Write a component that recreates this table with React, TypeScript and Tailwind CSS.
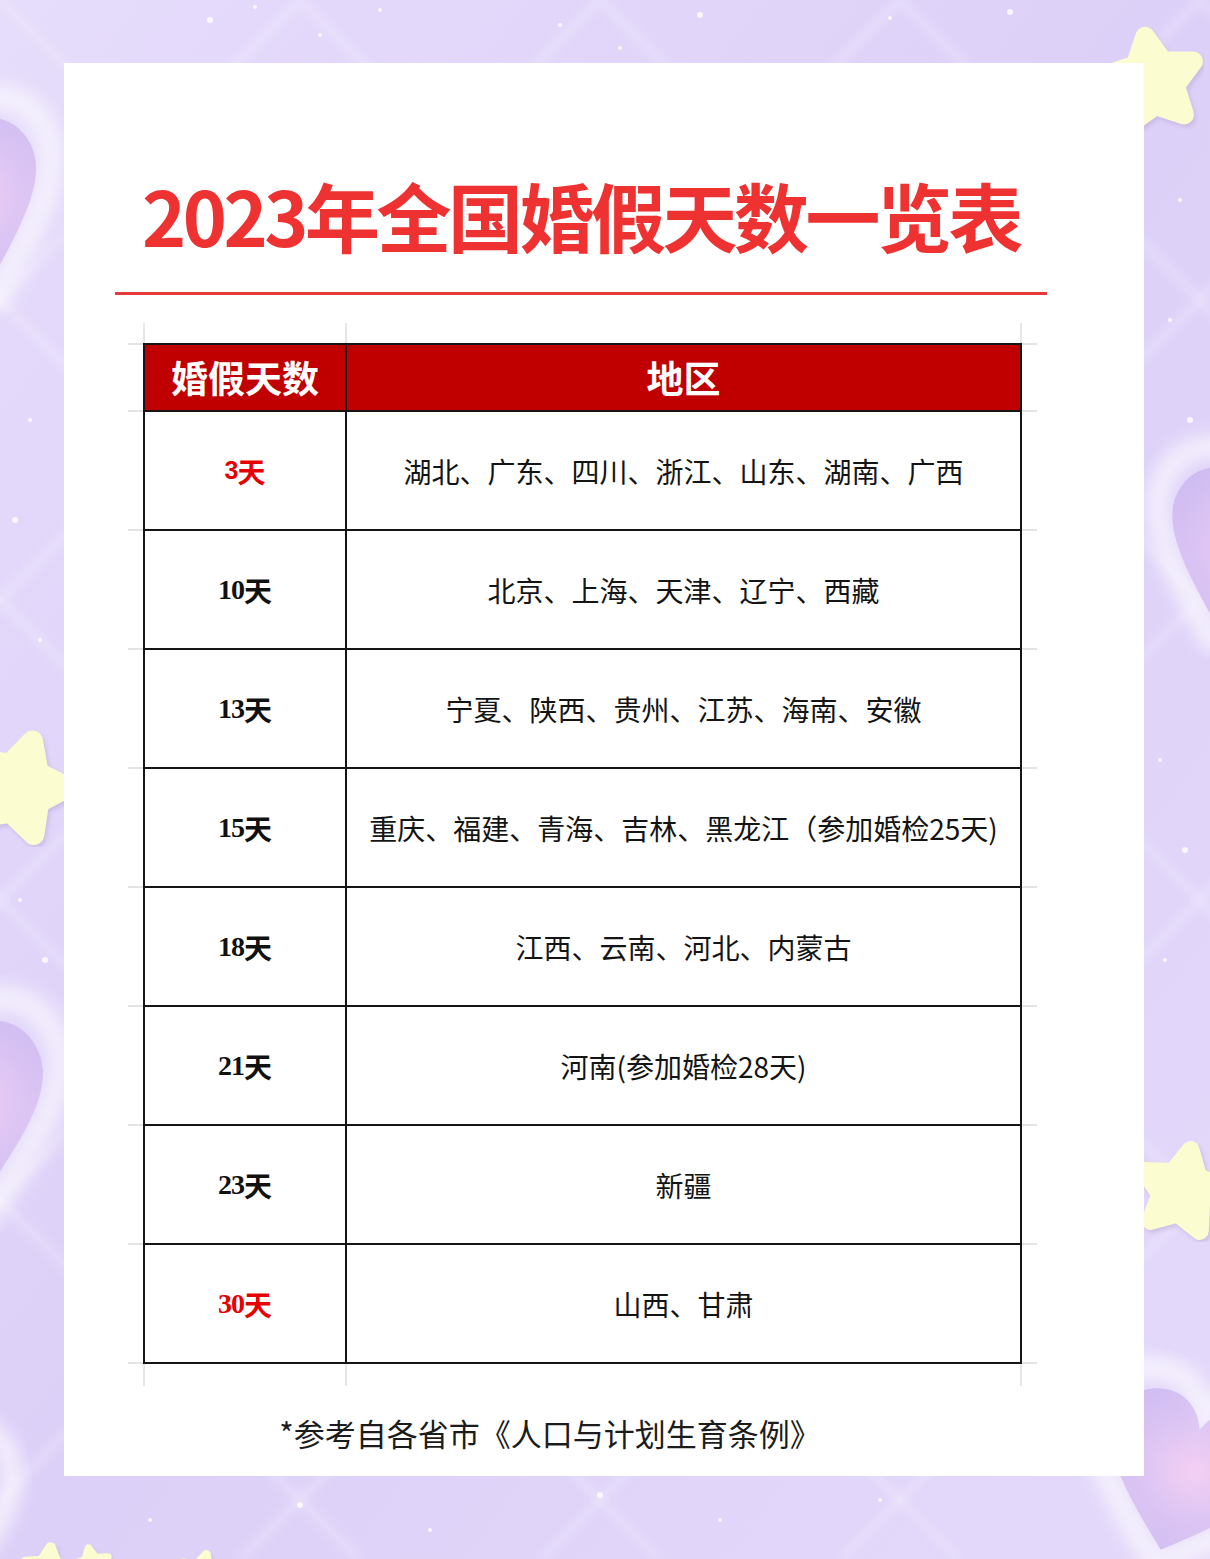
import React from "react";

const rows = [
  { n: "3", red: true, sans: true, r: "湖北、广东、四川、浙江、山东、湖南、广西" },
  { n: "10", r: "北京、上海、天津、辽宁、西藏" },
  { n: "13", r: "宁夏、陕西、贵州、江苏、海南、安徽" },
  { n: "15", r: "重庆、福建、青海、吉林、黑龙江（参加婚检25天)" },
  { n: "18", r: "江西、云南、河北、内蒙古" },
  { n: "21", r: "河南(参加婚检28天)" },
  { n: "23", r: "新疆" },
  { n: "30", red: true, r: "山西、甘肃" },
];

const HEART =
  "M50 92 C 22 68, 0 48, 0 28 C 0 11, 12 0, 27 0 C 38 0, 46 7, 50 17 C 54 7, 62 0, 73 0 C 88 0, 100 11, 100 28 C 100 48, 78 68, 50 92 Z";

function starPoints(cx: number, cy: number, R: number, r: number, rot = 0) {
  const pts: string[] = [];
  for (let i = 0; i < 10; i++) {
    const a = ((Math.PI * 2) / 10) * i - Math.PI / 2 + rot;
    const rad = i % 2 === 0 ? R : r;
    pts.push(`${(cx + rad * Math.cos(a)).toFixed(1)},${(cy + rad * Math.sin(a)).toFixed(1)}`);
  }
  return pts.join(" ");
}

function Heart({ x, y, s, rot }: { x: number; y: number; s: number; rot: number }) {
  return (
    <g transform={`translate(${x} ${y}) rotate(${rot} ${s / 2} ${s / 2}) scale(${s / 100})`}>
      <path d={HEART} fill="none" stroke="#ffffff" strokeOpacity="0.6" strokeWidth="12" filter="url(#blur4)" />
      <path d={HEART} fill="url(#heartFill)" opacity="0.85" transform="translate(9 9) scale(0.82)" />
    </g>
  );
}

function Star({ cx, cy, R, rot = 0 }: { cx: number; cy: number; R: number; rot?: number }) {
  return (
    <g>
      <polygon
        points={starPoints(cx + 2, cy + 3, R * 0.82, R * 0.42, rot)}
        fill="#b9a6d6"
        stroke="#b9a6d6"
        strokeWidth={R * 0.35}
        strokeLinejoin="round"
        opacity="0.5"
        filter="url(#blur2)"
      />
      <polygon
        points={starPoints(cx, cy, R * 0.82, R * 0.42, rot)}
        fill="#fbfccf"
        stroke="#fbfccf"
        strokeWidth={R * 0.35}
        strokeLinejoin="round"
      />
    </g>
  );
}

function Background() {
  const sparkles: [number, number, number][] = [
    [210, 20, 3], [255, 7, 2], [320, 35, 2], [380, 10, 2], [560, 25, 2], [620, 48, 2], [700, 15, 3],
    [890, 18, 2], [1010, 12, 3], [1180, 200, 2], [1170, 320, 2], [1190, 420, 3], [1160, 760, 2],
    [1185, 850, 3], [1165, 960, 2], [30, 420, 2], [15, 520, 3], [40, 640, 2], [20, 900, 2], [45, 960, 3],
    [150, 1520, 2], [300, 1505, 3], [430, 1530, 2], [600, 1495, 3], [720, 1520, 2], [880, 1500, 2],
  ];
  return (
    <svg className="absolute inset-0" width="1210" height="1559" viewBox="0 0 1210 1559">
      <defs>
        <linearGradient id="bg" x1="0" y1="0" x2="1" y2="1">
          <stop offset="0" stopColor="#e6dcfb" />
          <stop offset="0.5" stopColor="#ddd0f8" />
          <stop offset="1" stopColor="#e4d9fa" />
        </linearGradient>
        <radialGradient id="heartFill" cx="0.55" cy="0.45" r="0.6">
          <stop offset="0" stopColor="#f7cdf1" />
          <stop offset="0.5" stopColor="#dcc2f3" />
          <stop offset="1" stopColor="#cbb7f0" />
        </radialGradient>
        <filter id="blur4">
          <feGaussianBlur stdDeviation="4" />
        </filter>
        <filter id="blur2">
          <feGaussianBlur stdDeviation="2" />
        </filter>
      </defs>
      <rect width="1210" height="1559" fill="url(#bg)" />
      <g stroke="#ffffff" strokeOpacity="0.22" strokeWidth="8" filter="url(#blur4)">
        {[-1200, -900, -600, -300, 0, 300, 600, 900, 1200, 1500].map((o) => (
          <line key={"a" + o} x1={o} y1="0" x2={o + 1559} y2="1559" />
        ))}
        {[-300, 0, 300, 600, 900, 1200, 1500, 1800, 2100, 2400].map((o) => (
          <line key={"b" + o} x1={o} y1="0" x2={o - 1559} y2="1559" />
        ))}
      </g>
      <Heart x={-140} y={110} s={210} rot={-20} />
      <Heart x={-150} y={1010} s={225} rot={-15} />
      <Heart x={1140} y={460} s={200} rot={20} />
      <Heart x={1080} y={1380} s={205} rot={18} />
      <Heart x={-170} y={1430} s={190} rot={-10} />
      {sparkles.map(([x, y, r], i) => (
        <circle key={i} cx={x} cy={y} r={r} fill="#ffffff" opacity="0.8" />
      ))}
      <Star cx={1152} cy={82} R={56} rot={-0.15} />
      <Star cx={18} cy={788} R={60} rot={0.3} />
      <Star cx={1182} cy={1192} R={52} rot={0.2} />
      <Star cx={48} cy={1572} R={30} rot={0.1} />
      <Star cx={92} cy={1566} R={22} rot={-0.2} />
      <Star cx={200} cy={1575} R={26} rot={0.3} />
    </svg>
  );
}

function Spacer({ top = false }: { top?: boolean }) {
  return (
    <div className={`w-[15px] flex flex-col ${top ? "justify-between" : "justify-end"}`}>
      {top && <div className="h-[2px] bg-[#e4e4e4]" />}
      <div className="h-[2px] bg-[#e4e4e4]" />
    </div>
  );
}

function VStrip({ h }: { h: string }) {
  return (
    <div className={`flex ${h}`}>
      <div className="w-[15px]" />
      <div className="w-[2px] bg-[#e6e6e6]" />
      <div className="w-[200px]" />
      <div className="w-[2px] bg-[#e6e6e6]" />
      <div className="w-[673px]" />
      <div className="w-[2px] bg-[#e6e6e6]" />
      <div className="w-[15px]" />
    </div>
  );
}

export default function App() {
  const cjk = { fontFamily: '"Noto Sans CJK SC", "Noto Sans", sans-serif' };
  return (
    <div className="relative w-[1210px] h-[1559px] overflow-hidden" style={cjk}>
      <Background />
      <div className="relative pt-[63px] pl-[64px]">
        <div className="w-[1080px] h-[1413px] bg-white flex flex-col">
          <div className="ml-[51px] w-[932px] pt-[113px] text-center whitespace-nowrap text-[75px] leading-[78px] font-bold text-[#ee3131] tracking-[-3.5px]">
            2023年全国婚假天数一览表
          </div>
          <div className="ml-[51px] w-[932px] h-[3px] mt-[38px] bg-[#e63a3a]" />
          <div className="ml-[64px] w-[909px] mt-[28px] flex flex-col">
            <VStrip h="h-[20px]" />
            <div className="flex">
              <Spacer top />
              <div className="flex w-[879px] h-[69px] border-y-2 border-[#151515]">
                <div className="w-[204px] border-x-2 border-[#151515] bg-[#c00000] flex items-center justify-center text-white text-[37px] font-bold">
                  婚假天数
                </div>
                <div className="w-[675px] border-r-2 border-[#151515] bg-[#c00000] flex items-center justify-center text-white text-[37px] font-bold">
                  地区
                </div>
              </div>
              <Spacer top />
            </div>
            {rows.map((row) => (
              <div key={row.n} className="flex">
                <Spacer />
                <div className="flex w-[879px] h-[119px] border-b-2 border-[#151515]">
                  <div
                    className={`w-[204px] border-x-2 border-[#151515] flex items-center justify-center text-[28px] ${
                      row.red ? "text-[#e60000]" : "text-[#111]"
                    }`}
                  >
                    <span
                      className="font-semibold tracking-[-1px]"
                      style={{
                        fontFamily: row.sans
                          ? '"Liberation Sans", sans-serif'
                          : '"Liberation Serif", serif',
                        fontSize: row.sans ? "25px" : "28px",
                      }}
                    >
                      {row.n}
                    </span>
                    <span className="font-bold">天</span>
                  </div>
                  <div className="w-[675px] border-r-2 border-[#151515] flex items-center justify-center text-[28px] text-[#141414]">
                    {row.r}
                  </div>
                </div>
                <Spacer />
              </div>
            ))}
            <VStrip h="h-[22px]" />
          </div>
          <div className="w-[972px] mt-[27px] text-center text-[31px] leading-[40px] text-[#1c1c1c]">
            *参考自各省市《人口与计划生育条例》
          </div>
        </div>
      </div>
    </div>
  );
}
